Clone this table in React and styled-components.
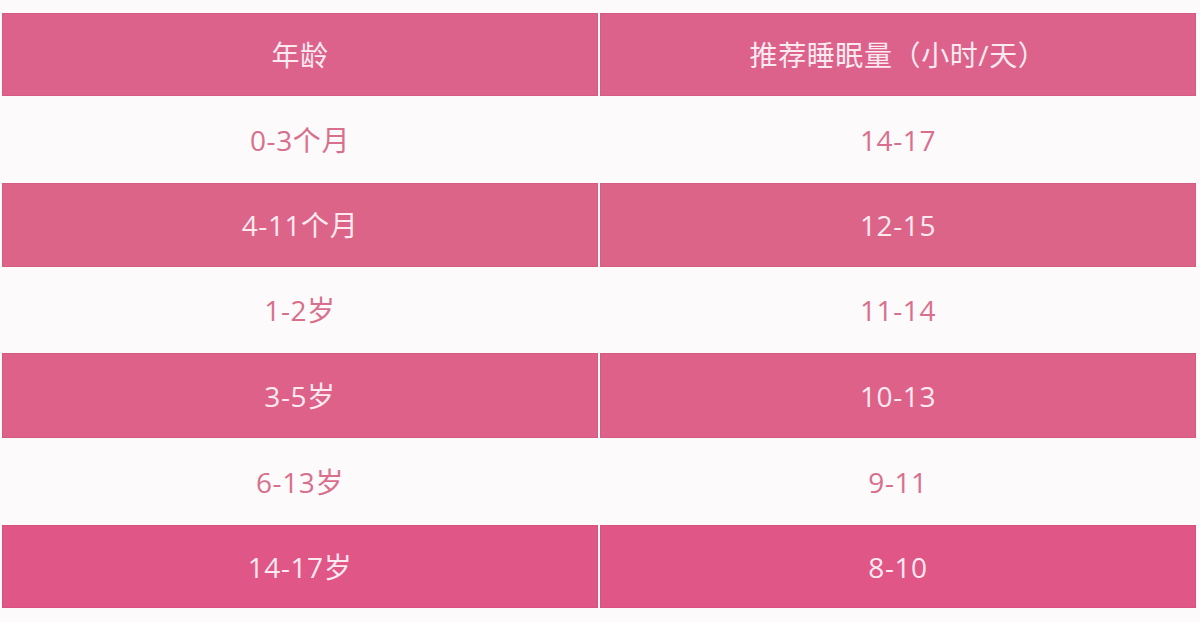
import React from "react";
import styled, { createGlobalStyle } from "styled-components";

const Global = createGlobalStyle`
  html, body { margin: 0; padding: 0; background: #fcfafb; }
  body { font-family: "Open Sans", "Noto Sans CJK SC", sans-serif; }
`;

const Page = styled.div`
  width: 1200px;
  height: 622px;
  box-sizing: border-box;
  padding: 13px 4px 0 2px;
  background: #fcfafb;
`;

const Table = styled.div`
  display: flex;
  flex-direction: column;
`;

const Row = styled.div`
  display: grid;
  grid-template-columns: 596px 596px;
  column-gap: 2px;
  height: ${(p) => p.$h}px;
`;

const Cell = styled.div`
  display: flex;
  align-items: center;
  justify-content: center;
  background: ${(p) => (p.$fill ? p.$fill : "transparent")};
  color: ${(p) => (p.$fill ? "#fdeaf1" : "#d8708d")};
  font-family: "Open Sans", "Noto Sans CJK SC", sans-serif;
  font-size: 28px;
  line-height: 1;
  letter-spacing: 0.6px;
  box-shadow: ${(p) => (p.$fill ? "inset 0 0 0 1px rgba(190,70,110,0.25)" : "none")};
`;

const rows = [
  { a: "年龄", b: "推荐睡眠量（小时/天）", fill: "#dc628b", h: 83 },
  { a: "0-3个月", b: "14-17", h: 87 },
  { a: "4-11个月", b: "12-15", fill: "#dc6489", h: 84 },
  { a: "1-2岁", b: "11-14", h: 86 },
  { a: "3-5岁", b: "10-13", fill: "#dd6188", h: 85 },
  { a: "6-13岁", b: "9-11", h: 87 },
  { a: "14-17岁", b: "8-10", fill: "#e05686", h: 83 },
];

export default function App() {
  return (
    <>
      <Global />
      <Page>
        <Table>
          {rows.map((r, i) => (
            <Row key={i} $h={r.h}>
              <Cell $fill={r.fill}>{r.a}</Cell>
              <Cell $fill={r.fill}>{r.b}</Cell>
            </Row>
          ))}
        </Table>
      </Page>
    </>
  );
}
